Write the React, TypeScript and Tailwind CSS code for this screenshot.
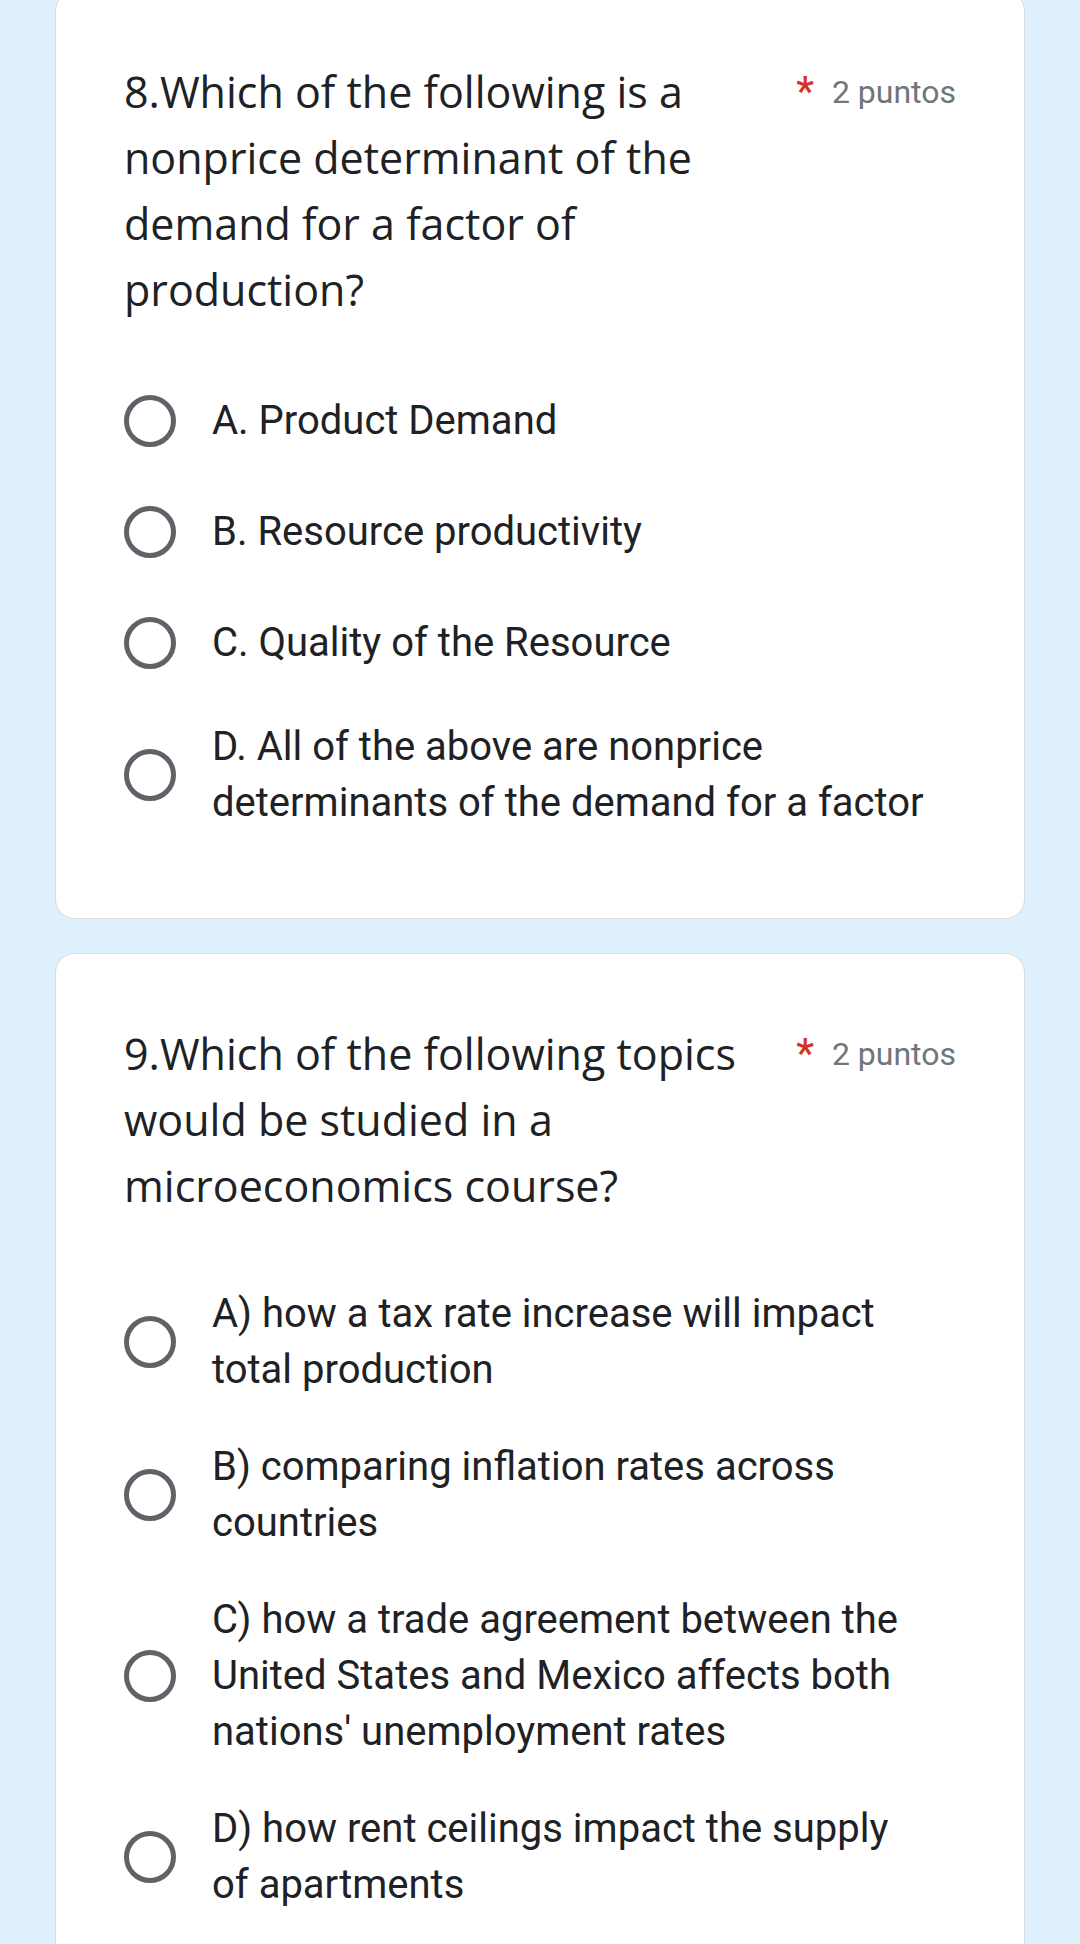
import React from "react";

type Question = {
  id: number;
  title: string;
  points: string;
  options: string[];
};

const questions: Question[] = [
  {
    id: 8,
    title: "8.Which of the following is a nonprice determinant of the demand for a factor of production?",
    points: "2 puntos",
    options: [
      "A. Product Demand",
      "B. Resource productivity",
      "C. Quality of the Resource",
      "D. All of the above are nonprice determinants of the demand for a factor",
    ],
  },
  {
    id: 9,
    title: "9.Which of the following topics would be studied in a microeconomics course?",
    points: "2 puntos",
    options: [
      "A) how a tax rate increase will impact total production",
      "B) comparing inflation rates across countries",
      "C) how a trade agreement between the United States and Mexico affects both nations' unemployment rates",
      "D) how rent ceilings impact the supply of apartments",
    ],
  },
];

const Radio = () => (
  <div className="w-[52px] h-[52px] shrink-0 rounded-full border-[5px] border-[#5f6368] bg-white" />
);

const QuestionCard = ({ q, first }: { q: Question; first?: boolean }) => {
  return (
    <div
      className={
        "bg-white border border-[#dadce0] rounded-[20px] px-[68px] pt-[67px] " +
        (first ? "-mt-[9px] pb-[87px]" : "mt-[34px] pb-[120px]")
      }
    >
      <div className="flex items-start">
        <div
          className="w-[647px] text-[43px] leading-[66px] text-[#202124]"
          style={{ fontFamily: "'Open Sans', sans-serif" }}
        >
          {q.title}
        </div>
        <div
          className="ml-auto flex items-start leading-[66px] whitespace-nowrap"
          style={{ fontFamily: "Roboto, sans-serif" }}
        >
          <span className="mt-[6px] text-[#d93025] text-[40px] font-medium leading-[54px]">*</span>
          <span className="ml-[18px] text-[32px] text-[#70757a]">{q.points}</span>
        </div>
      </div>

      <div className={"flex flex-col gap-[41px] " + (first ? "mt-[63px]" : "mt-[67px]")}>
        {q.options.map((opt, index) => (
          <label key={index} className="flex items-center min-h-[70px]">
            <Radio />
            <span
              className="ml-[36px] w-[722px] text-[40px] leading-[56px] text-[#202124]"
              style={{ fontFamily: "Roboto, sans-serif" }}
            >
              {opt}
            </span>
          </label>
        ))}
      </div>
    </div>
  );
};

const App = () => {
  return (
    <div className="min-h-screen bg-[#ddf0fc] px-[55px] overflow-hidden">
      {questions.map((q, i) => (
        <QuestionCard key={q.id} q={q} first={i === 0} />
      ))}
    </div>
  );
};

export default App;
